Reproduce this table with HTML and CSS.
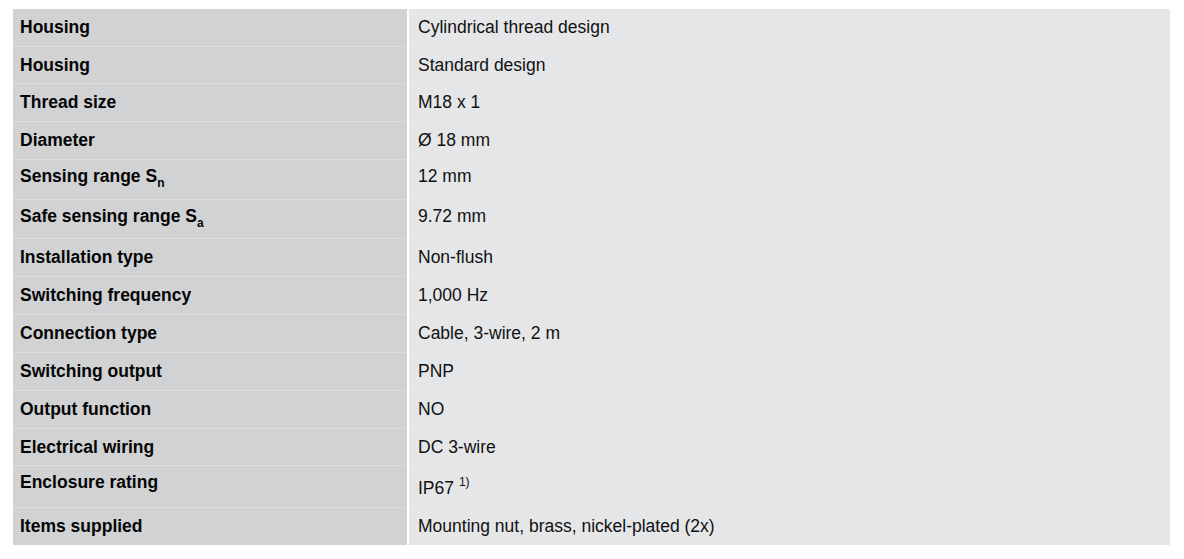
FILE: index.html
```html
<!DOCTYPE html>
<html>
<head>
<meta charset="utf-8">
<link rel="stylesheet" href="styles.css">
</head>
<body>
<table class="spec">
<tbody>
<tr class="h37"><th>Housing</th><td>Cylindrical thread design</td></tr>
<tr class="h37"><th>Housing</th><td>Standard design</td></tr>
<tr><th>Thread size</th><td>M18 x 1</td></tr>
<tr><th>Diameter</th><td>Ø 18 mm</td></tr>
<tr class="h40 tight"><th>Sensing range S<sub>n</sub></th><td>12 mm</td></tr>
<tr class="h39 tight"><th>Safe sensing range S<sub>a</sub></th><td>9.72 mm</td></tr>
<tr><th>Installation type</th><td>Non-flush</td></tr>
<tr><th>Switching frequency</th><td>1,000 Hz</td></tr>
<tr><th>Connection type</th><td>Cable, 3-wire, 2 m</td></tr>
<tr><th>Switching output</th><td>PNP</td></tr>
<tr><th>Output function</th><td>NO</td></tr>
<tr class="h37"><th>Electrical wiring</th><td>DC 3-wire</td></tr>
<tr class="h42 note"><th>Enclosure rating</th><td>IP67 <sup>1)</sup></td></tr>
<tr><th>Items supplied</th><td>Mounting nut, brass, nickel-plated (2x)</td></tr>
</tbody>
</table>
</body>
</html>
```

FILE: styles.css
```css
html, body {
  margin: 0;
  padding: 0;
  background: #ffffff;
}
body {
  padding: 9px 14px 0 13px;
  font-family: "Liberation Sans", Arial, sans-serif;
  font-size: 17.5px;
  color: #111111;
}
.spec {
  border-collapse: collapse;
  width: 1157px;
}
.spec th,
.spec td {
  height: 38px;
  padding: 8px 7px 0;
  box-sizing: border-box;
  line-height: 20px;
  vertical-align: top;
  text-align: left;
  border-bottom: 1px solid #ebebec;
}
.spec .h37 th, .spec .h37 td { height: 37px; }
.spec .h39 th, .spec .h39 td { height: 39px; }
.spec .h40 th, .spec .h40 td { height: 40px; }
.spec .h42 th, .spec .h42 td { height: 42px; }
.spec tr:last-child th,
.spec tr:last-child td {
  border-bottom: none;
}
.spec th {
  width: 395px;
  background: #d1d2d4;
  font-weight: bold;
  color: #050505;
  border-bottom-color: #dcdddf;
}
.spec td {
  background: #e5e6e8;
  border-left: 2px solid #ffffff;
  padding-left: 9px;
  font-weight: normal;
}
.spec .tight th,
.spec .tight td {
  padding-top: 6px;
}
.spec .note th {
  padding-top: 6px;
}
.spec .note td {
  padding-top: 12px;
}
.spec sub {
  font-size: 12px;
  line-height: 0;
  vertical-align: -5px;
}
.spec sup {
  font-size: 12px;
  line-height: 0;
  vertical-align: 8px;
}
```
